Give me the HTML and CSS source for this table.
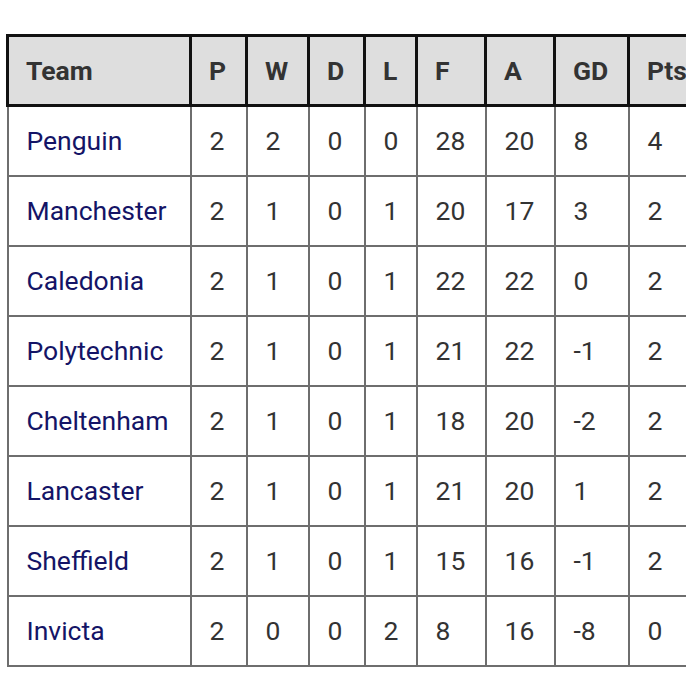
FILE: index.html
```html
<!DOCTYPE html>
<html>
<head>
<meta charset="utf-8">
<link rel="stylesheet" href="styles.css">
</head>
<body>
<div class="wrap">
<table class="standings">
<colgroup>
<col class="c-team"><col class="c-p"><col class="c-w"><col class="c-d"><col class="c-l"><col class="c-f"><col class="c-a"><col class="c-gd"><col class="c-pts">
</colgroup>
<thead>
<tr><th>Team</th><th>P</th><th>W</th><th>D</th><th>L</th><th>F</th><th>A</th><th>GD</th><th>Pts</th></tr>
</thead>
<tbody>
<tr><td class="team">Penguin</td><td>2</td><td>2</td><td>0</td><td>0</td><td>28</td><td>20</td><td>8</td><td>4</td></tr>
<tr><td class="team">Manchester</td><td>2</td><td>1</td><td>0</td><td>1</td><td>20</td><td>17</td><td>3</td><td>2</td></tr>
<tr><td class="team">Caledonia</td><td>2</td><td>1</td><td>0</td><td>1</td><td>22</td><td>22</td><td>0</td><td>2</td></tr>
<tr><td class="team">Polytechnic</td><td>2</td><td>1</td><td>0</td><td>1</td><td>21</td><td>22</td><td>-1</td><td>2</td></tr>
<tr><td class="team">Cheltenham</td><td>2</td><td>1</td><td>0</td><td>1</td><td>18</td><td>20</td><td>-2</td><td>2</td></tr>
<tr><td class="team">Lancaster</td><td>2</td><td>1</td><td>0</td><td>1</td><td>21</td><td>20</td><td>1</td><td>2</td></tr>
<tr><td class="team">Sheffield</td><td>2</td><td>1</td><td>0</td><td>1</td><td>15</td><td>16</td><td>-1</td><td>2</td></tr>
<tr><td class="team">Invicta</td><td>2</td><td>0</td><td>0</td><td>2</td><td>8</td><td>16</td><td>-8</td><td>0</td></tr>
</tbody>
</table>
</div>
</body>
</html>
```

FILE: styles.css
```css
html, body {
  margin: 0;
  padding: 0;
  background: #ffffff;
  overflow: hidden;
}
.wrap {
  padding: 34px 0 0 6px;
  width: 760px;
}
.standings {
  border-collapse: collapse;
  table-layout: fixed;
  width: 705px;
  font-family: Roboto, "Liberation Sans", sans-serif;
  font-size: 26.5px;
  color: #333333;
}
.c-team { width: 183px; }
.c-p { width: 56px; }
.c-w { width: 62px; }
.c-d { width: 56px; }
.c-l { width: 52px; }
.c-f { width: 69px; }
.c-a { width: 69px; }
.c-gd { width: 74px; }
.c-pts { width: 84px; }
.standings th,
.standings td {
  height: 70px;
  padding: 0 0 0 18px;
  text-align: left;
  vertical-align: middle;
  white-space: nowrap;
  box-sizing: border-box;
}
.standings th {
  background: #dedede;
  font-weight: 700;
  color: #333333;
  border: 3px solid #111111;
  padding-left: 17px;
}
.standings td {
  border: 2px solid #6e6e6e;
  font-weight: 400;
}
.standings td.team {
  color: #141466;
}
```
